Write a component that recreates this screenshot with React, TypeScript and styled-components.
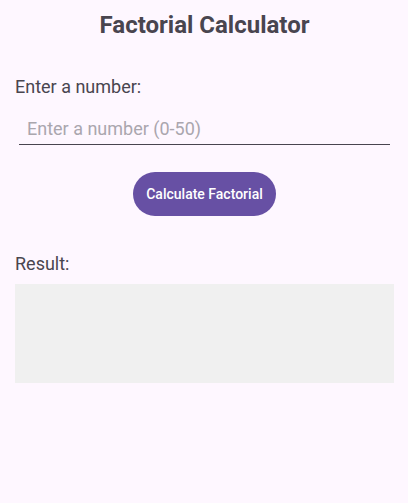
import React from "react";
import styled, { createGlobalStyle } from "styled-components";

const Global = createGlobalStyle`
  html, body { margin: 0; padding: 0; background: #fef7ff; }
  body { font-family: Roboto, "Noto Sans", sans-serif; }
`;

const Screen = styled.div`
  width: 408px;
  height: 503px;
  box-sizing: border-box;
  padding: 9px 14px 0 15px;
  display: flex;
  flex-direction: column;
  background: #fef7ff;
`;

const Title = styled.h1`
  margin: 0;
  text-align: center;
  font-size: 24px;
  line-height: 32px;
  font-weight: 700;
  color: #49454f;
`;

const Label = styled.div<{ $top: number }>`
  margin-top: ${(p) => p.$top}px;
  font-size: 18px;
  line-height: 24px;
  color: #49454f;
`;

const Input = styled.input`
  margin: 17px 4px 0;
  border: none;
  border-bottom: 1px solid #49454f;
  background: transparent;
  outline: none;
  padding: 0 8px 3px;
  font-family: Roboto, sans-serif;
  font-size: 18px;
  line-height: 25px;
  color: #1d1b20;
  &::placeholder { color: #aaa6ae; }
`;

const Button = styled.button`
  align-self: center;
  margin-top: 27px;
  height: 44px;
  padding: 0 13px;
  border: none;
  border-radius: 22px;
  background: #6750a4;
  color: #ffffff;
  font-family: Roboto, sans-serif;
  font-size: 14px;
  font-weight: 500;
`;

const ResultBox = styled.div`
  margin-top: 8px;
  height: 99px;
  background: #f0f0f0;
`;

export default function App() {
  return (
    <>
      <Global />
      <Screen>
        <Title>Factorial Calculator</Title>
        <Label $top={34}>Enter a number:</Label>
        <Input placeholder="Enter a number (0-50)" />
        <Button>Calculate Factorial</Button>
        <Label $top={36}>Result:</Label>
        <ResultBox />
      </Screen>
    </>
  );
}
